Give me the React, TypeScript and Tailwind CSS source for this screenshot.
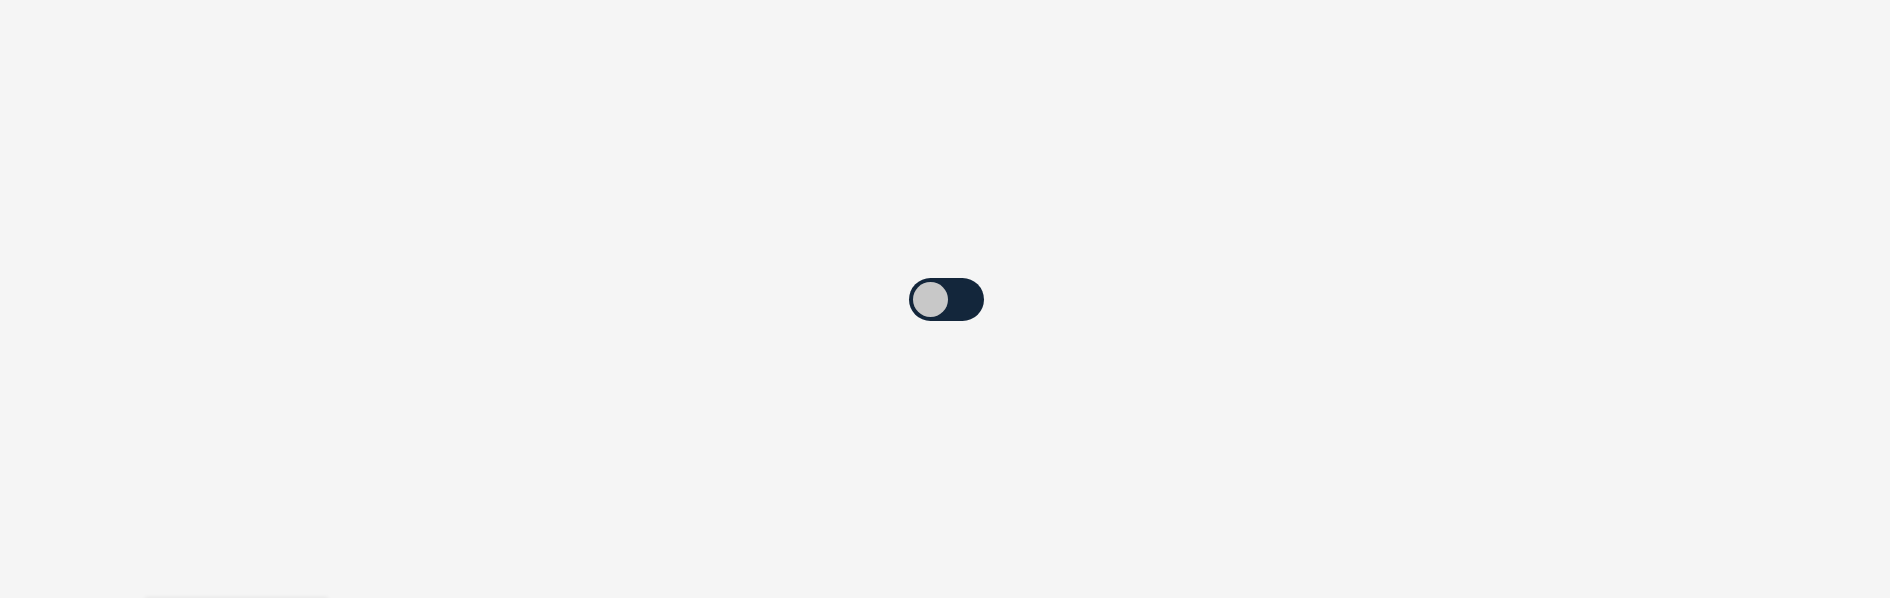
import { useState } from "react";

const Toggle = () => {
  const [on, setOn] = useState(false);

  return (
    <button
      type="button"
      role="switch"
      aria-checked={on}
      onClick={() => setOn(!on)}
      className="flex h-[43px] w-[75px] items-center rounded-full bg-[#13263b] p-[4px] cursor-pointer"
    >
      <span
        className={
          on
            ? "block h-[35px] w-[35px] rounded-full bg-[#c8c8c8] translate-x-[32px] transition-transform"
            : "block h-[35px] w-[35px] rounded-full bg-[#c8c8c8] transition-transform"
        }
      />
    </button>
  );
};

const App = () => {
  return (
    <div className="min-h-screen bg-[#f5f5f5] font-['Liberation_Sans',sans-serif]">
      <div className="h-[598px] flex items-center justify-center pl-[2px] pt-[1px]">
        <Toggle />
      </div>
      <div className="ml-[145px] w-[183px] h-[40px] bg-[#f5f5f5] shadow-[0_-1px_4px_rgba(0,0,0,0.06)]" />
    </div>
  );
};

export default App;
